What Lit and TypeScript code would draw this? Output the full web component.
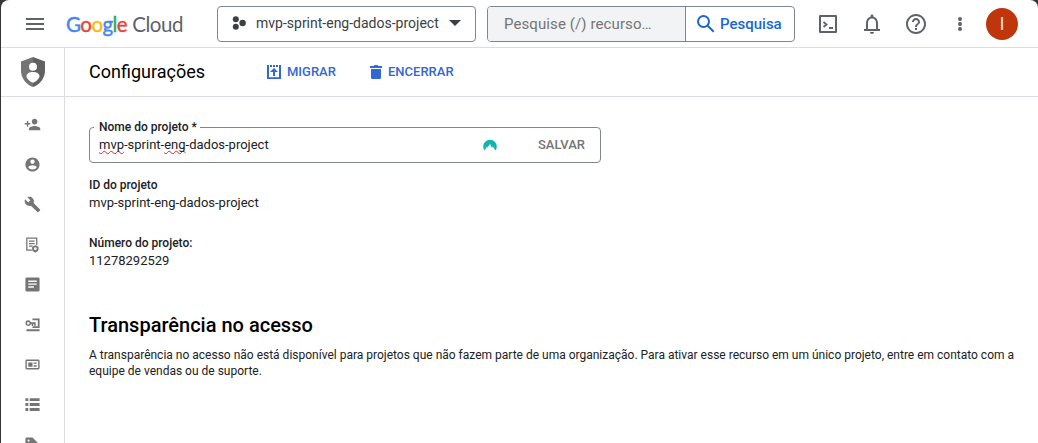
import { LitElement, html, css, svg } from "lit";
import { customElement } from "lit/decorators.js";

const sideIcons = [
  svg`<path d="M15 12c2.210 0 4-1.790 4-4s-1.790-4-4-4-4 1.790-4 4 1.790 4 4 4zm-9-2V7H4v3H1v2h3v3h2v-3h3v-2H6zm9 4c-2.670 0-8 1.340-8 4v2h16v-2c0-2.660-5.330-4-8-4z"/>`,
  svg`<path d="M12 2C6.480 2 2 6.480 2 12s4.480 10 10 10 10-4.480 10-10S17.520 2 12 2zm0 3c1.660 0 3 1.340 3 3s-1.340 3-3 3-3-1.340-3-3 1.340-3 3-3zm0 14.200c-2.500 0-4.710-1.280-6-3.220.030-1.990 4-3.080 6-3.080 1.990 0 5.970 1.090 6 3.080-1.290 1.940-3.500 3.220-6 3.220z"/>`,
  svg`<path d="M22.700 19l-9.100-9.100c.900-2.300.400-5-1.500-6.900-2-2-5-2.400-7.400-1.300L9 6 6 9 1.600 4.700C.400 7.100.900 10.100 2.900 12.100c1.900 1.900 4.600 2.400 6.900 1.500l9.100 9.100c.400.400 1 .400 1.400 0l2.300-2.300c.500-.400.500-1.100.100-1.400z"/>`,
  svg`<path d="M12 20H4V3h14v10" fill="none" stroke="currentColor" stroke-width="1.800"/><path d="M7 6.500h8v1.600H7zM7 10h8v1.600H7zM7 13.500h5v1.600H7z"/><path fill-rule="evenodd" d="M16 13l4.500 2v3.200c0 2.400-2 4.300-4.500 5-2.500-.7-4.500-2.600-4.500-5V15zm0 3a2 2 0 100 4 2 2 0 000-4z"/>`,
  svg`<path fill-rule="evenodd" d="M4 2h16a2 2 0 012 2v16a2 2 0 01-2 2H4a2 2 0 01-2-2V4a2 2 0 012-2zm2 4.500v2h12v-2zm0 4v2h12v-2zm0 4v2h8v-2z"/>`,
  svg`<path fill-rule="evenodd" d="M6 6a4 4 0 103.700 5.500H11V14h2v-2.500h1.500V14h2V8.700H9.700A4 4 0 006 6zm0 2.300a1.800 1.800 0 110 3.600 1.800 1.800 0 010-3.600z"/><path d="M12 3.500h10V17H12v-2.500h7.500V6H12zM3.500 18.700H22v2.800H3.500z"/>`,
  svg`<path fill-rule="evenodd" d="M4 5h16a2 2 0 012 2v10a2 2 0 01-2 2H4a2 2 0 01-2-2V7a2 2 0 012-2zm0 2.200v9.600h16V7.200zM6 9h6v6H6zm7.500 0H18v2h-4.500zm0 4H18v2h-4.500z"/>`,
  svg`<path d="M2 3h4v4H2zm6 0h14v4H8zM2 10h4v4H2zm6 0h14v4H8zM2 17h4v4H2zm6 0h14v4H8z"/>`,
  svg`<path fill-rule="evenodd" d="M21.400 11.600l-9-9C12 2.200 11.500 2 11 2H4c-1.100 0-2 .9-2 2v7c0 .6.200 1.100.6 1.400l9 9c.8.800 2 .8 2.800 0l7-7c.8-.8.8-2 0-2.800zM6.500 8a1.500 1.500 0 110-3 1.500 1.500 0 010 3z"/>`,
];

@customElement("app-root")
export class AppRoot extends LitElement {
  static styles = css`
    :host {
      display: block;
      height: 443px;
      overflow: hidden;
      background: #35363a;
      font-family: Roboto, sans-serif;
      color: #202124;
    }
    * { box-sizing: border-box; }
    svg { display: block; flex: none; fill: currentColor; }
    .page {
      margin-left: 1px;
      height: 443px;
      background: #fff;
      border-radius: 8px 8px 0 0;
      overflow: hidden;
      display: grid;
      grid-template: 48px 49px 1fr / 64px 1fr;
    }
    header {
      grid-column: 1 / 3;
      display: flex;
      align-items: center;
      border-bottom: 1px solid #dadce0;
      color: #5f6368;
    }
    .menu { margin-left: 25px; width: 18px; }
    .logo {
      display: flex;
      margin-left: 22px;
      width: 117px;
      font: 20.5px/28px Lato, sans-serif;
      white-space: nowrap;
    }
    .google { width: 67px; -webkit-text-stroke: .4px currentColor; letter-spacing: -.55px; }
    .cloud { letter-spacing: -.45px; }
    .blue { color: #4285f4; }
    .red { color: #ea4335; }
    .yellow { color: #fbbc04; }
    .green { color: #34a853; }
    .picker {
      display: flex;
      align-items: center;
      margin-left: 34px;
      width: 259px;
      height: 36px;
      border: 1px solid #80868b;
      border-radius: 4px;
      padding: 0 14px 1px 14px;
      color: #3c4043;
      font-size: 14px;
      white-space: nowrap;
    }
    .picker span { margin-left: 10px; flex: 1; }
    .search {
      display: flex;
      margin-left: 11px;
      width: 308px;
      height: 36px;
      border: 1px solid #80868b;
      border-radius: 4px;
      overflow: hidden;
      line-height: 34px;
      white-space: nowrap;
    }
    .query {
      width: 198px;
      padding-left: 16px;
      background: #f1f3f4;
      border-right: 1px solid #80868b;
      color: #757575;
      font-size: 15px;
      letter-spacing: .1px;
    }
    .go {
      display: flex;
      align-items: center;
      padding-left: 11px;
      color: #1967d2;
      font-size: 15px;
      font-weight: 500;
    }
    .go span { margin-left: 5px; }
    .tools { display: flex; align-items: center; margin-left: 21px; }
    .bell, .help { margin-left: 20px; }
    .more { margin-left: 20px; }
    .avatar {
      margin-left: 14px;
      width: 32px;
      height: 32px;
      border-radius: 50%;
      background: #bf360c;
      color: #f6ded8;
      text-align: center;
      font-size: 18.5px;
      line-height: 32px;
    }
    .product {
      display: flex;
      justify-content: center;
      align-items: center;
      border: solid #dadce0;
      border-width: 0 1px 1px 0;
      padding-left: 1px;
      color: #616161;
    }
    .bar {
      display: flex;
      align-items: center;
      border-bottom: 1px solid #dadce0;
      padding: 0 0 1px 24px;
      white-space: nowrap;
    }
    h1 { margin: 0; width: 176px; padding-bottom: 1px; font-size: 18px; font-weight: 400; color: #000; }
    .action {
      display: flex;
      align-items: center;
      color: #3367d6;
      font-size: 13px;
      font-weight: 500;
    }
    .action span { margin-left: 4px; padding-bottom: 1px; }
    .action.migrate { width: 103px; }
    nav {
      display: flex;
      flex-direction: column;
      align-items: center;
      gap: 23px;
      padding: 19px 0 0;
      border-right: 1px solid #dadce0;
      color: #757575;
      min-height: 0;
      overflow: hidden;
    }
    main { padding: 30px 24px 0; white-space: nowrap; min-height: 0; font-size: 13px; line-height: 20px; }
    .field { position: relative; display: flex; align-items: center; width: 512px; height: 36px; border: 1px solid #80868b; border-radius: 4px; padding: 0 14px 1px 9px; }
    label { position: absolute; left: 4px; top: -11px; padding: 0 3px 0 5px; background: #fff; }
    label, .caption { font-size: 12px; line-height: 20px; font-weight: 500; }
    .value { width: 384px; }
    .typo { text-decoration: underline wavy #ee2029 1.3px; text-underline-offset: 1px; text-decoration-skip-ink: none; }
    .save { margin-left: 41px; color: #757575; font-weight: 500; }
    .caption { margin-top: 12px; }
    .caption.number { margin-top: 22px; }
    .text { line-height: 16px; }
    h2 { margin: 44px 0 0; font-size: 20px; line-height: 24px; font-weight: 500; color: #000; }
    p { margin: 10px 0 0; font-size: 12px; line-height: 16px; }
  `;

  render() {
    return html`
      <div class="page">
        <header>
          <svg class="menu" width="18" height="12" viewBox="0 0 18 12"><path d="M0 0h18v2H0zm0 5h18v2H0zm0 5h18v2H0z"/></svg>
          <div class="logo"><div class="google"><span class="blue">G</span><span class="red">o</span><span class="yellow">o</span><span class="blue">g</span><span class="green">l</span><span class="red">e</span></div><div class="cloud">Cloud</div></div>
          <div class="picker">
            <svg width="14" height="14" viewBox="0 0 14 14"><circle cx="3.800" cy="3.200" r="3"/><circle cx="3.800" cy="10.800" r="3"/><circle cx="10.600" cy="7" r="3.200"/></svg>
            <span>mvp-sprint-eng-dados-project</span>
            <svg width="12" height="6" viewBox="0 0 12 6"><path d="M0 0h12L6 6z"/></svg>
          </div>
          <div class="search">
            <div class="query">Pesquise (/) recurso…</div>
            <div class="go">
              <svg width="18" height="18" viewBox="0 0 18 18"><g fill="none" stroke="currentColor" stroke-width="2"><circle cx="6.500" cy="6.500" r="5.500"/><path d="M10.700 10.700L16.700 16.700"/></g></svg>
              <span>Pesquisa</span>
            </div>
          </div>
          <div class="tools">
            <svg width="24" height="24" viewBox="0 0 24 24"><path d="M4 4h16v16H4z" fill="none" stroke="currentColor" stroke-width="2" stroke-linejoin="round"/><path d="M7.500 10l3 2.500-3 2.500" fill="none" stroke="currentColor" stroke-width="1.800"/><path d="M13 15h4v2h-4z"/></svg>
            <svg class="bell" width="24" height="24" viewBox="0 0 24 24"><path d="M18 17v-6c0-3.070-1.630-5.640-4.500-6.320V4c0-.830-.670-1.500-1.500-1.500s-1.500.670-1.500 1.500v.680C7.640 5.360 6 7.920 6 11v6H4v2h16v-2zm-2 0H8v-6c0-2.480 1.510-4.500 4-4.500s4 2.020 4 4.500zm-4 5c1.100 0 2-.9 2-2h-4c0 1.100.9 2 2 2z"/></svg>
            <svg class="help" width="24" height="24" viewBox="0 0 24 24"><path d="M11 18h2v-2h-2v2zm1-16C6.480 2 2 6.480 2 12s4.480 10 10 10 10-4.480 10-10S17.520 2 12 2zm0 18c-4.410 0-8-3.590-8-8s3.590-8 8-8 8 3.590 8 8-3.590 8-8 8zm0-14c-2.210 0-4 1.790-4 4h2c0-1.100.9-2 2-2s2 .9 2 2c0 2-3 1.750-3 5h2c0-2.250 3-2.500 3-5 0-2.210-1.790-4-4-4z"/></svg>
            <svg class="more" width="24" height="24" viewBox="0 0 24 24"><circle cx="12" cy="7" r="2"/><circle cx="12" cy="12" r="2"/><circle cx="12" cy="17" r="2"/></svg>
          </div>
          <div class="avatar">I</div>
        </header>
        <div class="product">
          <svg width="24" height="30" viewBox="0 0 24 30"><path fill="#757575" d="M12 0L0 4.500v9C0 21 5 27.500 12 30z"/><path d="M12 0l12 4.500v9C24 21 19 27.500 12 30z"/><circle cx="12" cy="9.700" r="4" fill="#fff"/><path fill="#fff" d="M12 15c3.500 0 6.500 1.500 6.500 4.200 0 2-3 5.300-6.500 6.500-3.500-1.200-6.500-4.500-6.500-6.500C5.500 16.500 8.500 15 12 15z"/></svg>
        </div>
        <div class="bar">
          <h1>Configurações</h1>
          <div class="action migrate">
            <svg width="18" height="18" viewBox="0 0 18 18"><path d="M2 2v14h14V2h-2v12.300H4V2zM5 2h2v2H5zm3 0h2v2H8zm3 0h2v2h-2zM9 5l4 4h-3v4H8V9H5z"/></svg>
            <span>MIGRAR</span>
          </div>
          <div class="action">
            <svg width="16" height="16" viewBox="0 0 16 16"><path d="M3 5h10v8.500a1.500 1.500 0 01-1.500 1.500h-7A1.500 1.500 0 013 13.500zM2 2h3.500l1-1h3l1 1H14v2H2z"/></svg>
            <span>ENCERRAR</span>
          </div>
        </div>
        <nav>${sideIcons.map((icon) => html`<svg width="17" height="17" viewBox="0 0 24 24">${icon}</svg>`)}</nav>
        <main>
          <div class="field">
            <label>Nome do projeto *</label>
            <div class="value"><span class="typo">mvp</span>-sprint-<span class="typo">eng</span>-dados-project</div>
            <svg width="14" height="12" viewBox="0 0 14 12"><path fill="#0fb5ae" d="M1.500 11.500A6.800 6.800 0 01.200 7.500a6.800 6.800 0 0113.600 0 6.800 6.800 0 01-1.300 4L9.800 7.500l-.9 1.300L7 5 4.600 8.500l-.7-.8z"/></svg>
            <div class="save">SALVAR</div>
          </div>
          <div class="caption">ID do projeto</div>
          <div class="text">mvp-sprint-eng-dados-project</div>
          <div class="caption number">Número do projeto:</div>
          <div class="text">11278292529</div>
          <h2>Transparência no acesso</h2>
          <p>A transparência no acesso não está disponível para projetos que não fazem parte de uma organização. Para ativar esse recurso em um único projeto, entre em contato com a<br>equipe de vendas ou de suporte.</p>
        </main>
      </div>
    `;
  }
}
